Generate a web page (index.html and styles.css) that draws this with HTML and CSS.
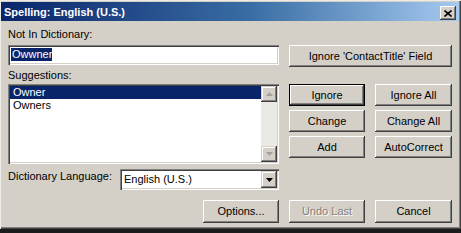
FILE: index.html
```html
<!DOCTYPE html>
<html>
<head>
<meta charset="utf-8">
<link rel="stylesheet" href="styles.css">
</head>
<body>
<div class="window">
  <div class="titlebar">
    <span class="title">Spelling: English (U.S.)</span>
    <div class="close">
      <svg width="8" height="7" viewBox="0 0 8 7"><path d="M0.5 0.5 L7.5 6.5 M7.5 0.5 L0.5 6.5" stroke="#000" stroke-width="1.6" fill="none"/></svg>
    </div>
  </div>
  <div class="body">
    <div class="row top-row">
      <div class="left">
        <div class="label label-first">Not In Dictionary:</div>
        <div class="field"><span class="sel">Owwner</span></div>
      </div>
      <div class="right right-top">
        <div class="btn wide">Ignore 'ContactTitle' Field</div>
      </div>
    </div>
    <div class="row mid-row">
      <div class="left">
        <div class="label label-sugg">Suggestions:</div>
        <div class="listbox">
          <div class="items">
            <div class="item selected">Owner</div>
            <div class="item">Owners</div>
          </div>
          <div class="scrollbar">
            <div class="sbtn"><svg width="7" height="4" viewBox="0 0 7 4"><path d="M3.5 0 L7 4 L0 4 Z" fill="#a0a0a0"/></svg></div>
            <div class="track"></div>
            <div class="sbtn"><svg width="7" height="4" viewBox="0 0 7 4"><path d="M0 0 L7 0 L3.5 4 Z" fill="#a0a0a0"/></svg></div>
          </div>
        </div>
      </div>
      <div class="right btn-grid">
        <div class="btn default">Ignore</div>
        <div class="btn">Ignore All</div>
        <div class="btn">Change</div>
        <div class="btn">Change All</div>
        <div class="btn">Add</div>
        <div class="btn">AutoCorrect</div>
      </div>
    </div>
    <div class="row lang-row">
      <div class="label lang-label">Dictionary Language:</div>
      <div class="combo">
        <span class="combo-text">English (U.S.)</span>
        <div class="sbtn combo-btn"><svg width="7" height="4" viewBox="0 0 7 4"><path d="M0 0 L7 0 L3.5 4 Z" fill="#000"/></svg></div>
      </div>
    </div>
    <div class="row bottom-row">
      <div class="btn b76">Options...</div>
      <div class="btn b76 disabled">Undo Last</div>
      <div class="btn b77">Cancel</div>
    </div>
  </div>
</div>
<div class="below"></div>
</body>
</html>
```
FILE: styles.css
```css
html, body {
  margin: 0;
  padding: 0;
  background: #222;
}
body {
  width: 461px;
  height: 233px;
  overflow: hidden;
  font-family: "Liberation Sans", Arial, sans-serif;
  font-size: 11px;
  color: #000;
}
.window {
  box-sizing: border-box;
  width: 461px;
  height: 229px;
  background: #d4d0c8;
  box-shadow: inset 1px 1px #eeece6, inset -1px -1px #404040, inset -2px -2px #808080;
  padding-top: 2px;
  display: flex;
  flex-direction: column;
}
.titlebar {
  height: 19px;
  margin: 0 2px 0 1px;
  background: linear-gradient(to right, #0a246a 0%, #3a6ea5 55%, #a6caf0 100%);
  display: flex;
  align-items: center;
  justify-content: space-between;
}
.title {
  color: #fff;
  font-weight: bold;
  font-size: 11px;
  padding-left: 3px;
  padding-top: 2px;
  line-height: 13px;
}
.close {
  width: 16px;
  height: 14px;
  margin-right: 3px;
  margin-top: 3px;
  background: #d4d0c8;
  box-shadow: inset -1px -1px #404040, inset 1px 1px #fff, inset -2px -2px #808080;
  display: flex;
  align-items: center;
  justify-content: center;
}
.body {
  padding: 0 9px 0 8px;
  display: flex;
  flex-direction: column;
}
.row {
  display: flex;
  gap: 10px;
}
.left {
  width: 271px;
  display: flex;
  flex-direction: column;
}
.right {
  width: 163px;
}
.label {
  line-height: 13px;
  height: 13px;
  white-space: nowrap;
}
.label-first {
  margin-top: 7px;
}
.field {
  box-sizing: border-box;
  margin-top: 4px;
  height: 20px;
  background: #fff;
  box-shadow: inset 1px 1px #808080, inset 2px 2px #404040, inset -1px -1px #fff, inset -2px -2px #d4d0c8;
  padding: 3px 0 0 3px;
  line-height: 13px;
}
.sel {
  background: #0a246a;
  color: #fff;
  display: inline-block;
  padding: 0 0 0 1px;
  line-height: 13px;
}
.right-top {
  padding-top: 24px;
}
.btn {
  box-sizing: border-box;
  height: 22px;
  background: #d4d0c8;
  box-shadow: inset -1px -1px #404040, inset 1px 1px #fff, inset -2px -2px #808080;
  display: flex;
  align-items: center;
  justify-content: center;
  white-space: nowrap;
  line-height: 13px;
}
.btn.default {
  box-shadow: inset 0 0 0 1px #000, inset -2px -2px #404040, inset 2px 2px #fff, inset -3px -3px #808080;
}
.btn.disabled {
  color: #808080;
  text-shadow: 1px 1px #fff;
}
.mid-row .label-sugg {
  margin-top: 2px;
}
.listbox {
  box-sizing: border-box;
  margin-top: 2px;
  height: 80px;
  background: #fff;
  box-shadow: inset 1px 1px #808080, inset 2px 2px #404040, inset -1px -1px #fff, inset -2px -2px #d4d0c8;
  padding: 2px;
  display: flex;
}
.items {
  flex: 1;
}
.item {
  height: 13px;
  line-height: 13px;
  padding-left: 3px;
}
.item.selected {
  background: #0a246a;
  color: #fff;
}
.scrollbar {
  width: 16px;
  display: flex;
  flex-direction: column;
}
.sbtn {
  box-sizing: border-box;
  width: 16px;
  height: 16px;
  background: #d4d0c8;
  box-shadow: inset -1px -1px #404040, inset 1px 1px #d4d0c8, inset -2px -2px #808080, inset 2px 2px #fff;
  display: flex;
  align-items: center;
  justify-content: center;
}
.track {
  flex: 1;
  background: #ebe9e4;
}
.btn-grid {
  margin-top: 17px;
  display: grid;
  grid-template-columns: 76px 77px;
  column-gap: 10px;
  row-gap: 4px;
  align-content: start;
}
.lang-row {
  margin-top: 5px;
  gap: 0;
  align-items: flex-start;
}
.lang-label {
  width: 112px;
  margin-top: 1px;
}
.combo {
  box-sizing: border-box;
  width: 159px;
  height: 21px;
  background: #fff;
  box-shadow: inset 1px 1px #808080, inset 2px 2px #404040, inset -1px -1px #fff, inset -2px -2px #d4d0c8;
  padding: 2px;
  display: flex;
  justify-content: space-between;
}
.combo-text {
  padding: 2px 0 0 2px;
  line-height: 13px;
}
.combo-btn {
  height: 17px;
}
.bottom-row {
  margin-top: 10px;
  justify-content: flex-end;
}
.bottom-row .btn {
  height: 23px;
}
.b76 { width: 76px; }
.b77 { width: 77px; }
.wide { width: 163px; }
.below {
  height: 4px;
  background: #1c1c1c;
}
```
